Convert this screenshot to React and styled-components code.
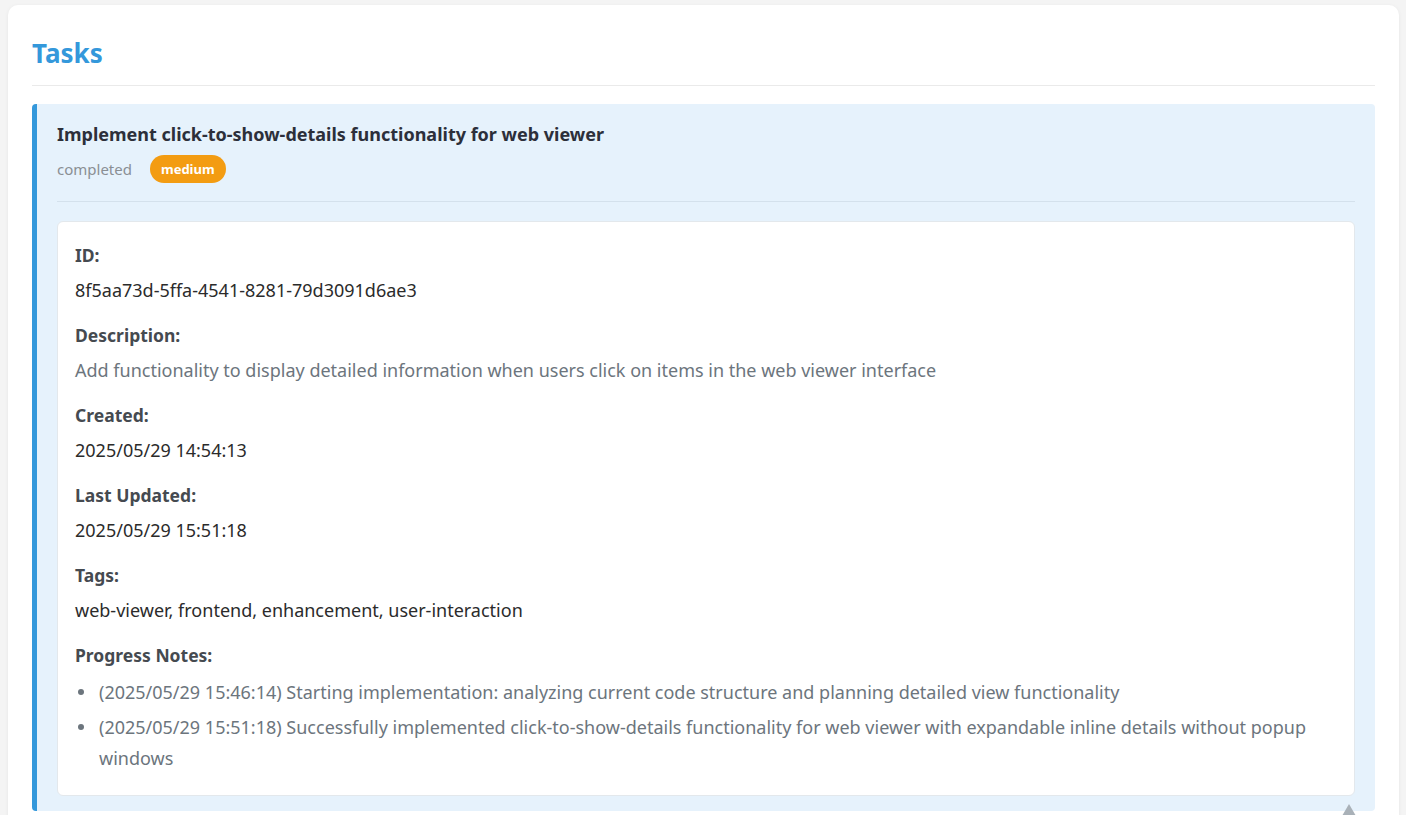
import React from "react";
import styled, { createGlobalStyle } from "styled-components";

const Global = createGlobalStyle`
  html, body { margin: 0; padding: 0; background: #f4f4f4; }
  body { font-family: "Noto Sans", "Open Sans", sans-serif; color: #333; }
  * { box-sizing: border-box; }
`;

const Page = styled.div`
  padding: 5px 7px 0 8px;
`;

const Container = styled.div`
  background: #fff;
  border-radius: 10px;
  box-shadow: 0 1px 4px rgba(0,0,0,0.06);
  padding: 24px 24px 24px 24px;
`;

const Heading = styled.h2`
  margin: 0 0 18px 0;
  padding: 5px 0 13px 0;
  font-size: 26px;
  line-height: 38px;
  font-weight: 700;
  color: #3498db;
  border-bottom: 1px solid #eaeaea;
`;

const TaskCard = styled.div`
  position: relative;
  background: #e6f2fc;
  border-left: 5px solid #3498db;
  border-radius: 4px;
  padding: 17px 20px 15px 20px;
`;

const TaskTitle = styled.div`
  font-size: 18px;
  font-weight: 700;
  color: #2c2f3a;
  line-height: 27px;
`;

const Meta = styled.div`
  display: flex;
  align-items: center;
  gap: 18px;
  margin-top: 7px;
  padding-bottom: 18px;
  border-bottom: 1px solid #d4e1ec;
`;

const Status = styled.span`
  font-size: 15px;
  color: #8a8f94;
`;

const Badge = styled.span`
  display: inline-flex;
  align-items: center;
  height: 28px;
  padding: 0 11px;
  border-radius: 14px;
  background: #f39c12;
  color: #fff;
  font-size: 13px;
  font-weight: 700;
`;

const Details = styled.div`
  margin-top: 19px;
  background: #fff;
  border: 1px solid #e3e8ec;
  border-radius: 6px;
  padding: 20px 18px 17px 17px;
`;

const Field = styled.div`
  margin-bottom: 18px;
  &:last-child { margin-bottom: 0; }
`;

const Label = styled.div`
  font-size: 17.5px;
  font-weight: 700;
  color: #454a50;
  line-height: 27px;
  margin-bottom: 8px;
`;

const Value = styled.div`
  font-size: 18px;
  line-height: 27px;
  color: ${(p) => (p.$muted ? "#6c757d" : "#2b2b2b")};
`;

const Notes = styled.ul`
  margin: 0;
  padding-left: 24px;
  list-style: none;
  color: #6c757d;
  font-size: 18px;
  line-height: 31px;
`;

const Note = styled.li`
  position: relative;
  margin-bottom: 4px;
  &::before {
    content: "";
    position: absolute;
    left: -21px;
    top: 12px;
    width: 6px;
    height: 6px;
    border-radius: 50%;
    background: #6c757d;
  }
`;

const Arrow = styled.div`
  position: absolute;
  right: 19px;
  bottom: -5px;
  width: 0;
  height: 0;
  border-left: 7px solid transparent;
  border-right: 7px solid transparent;
  border-bottom: 12px solid #a9b1b8;
`;

export default function App() {
  return (
    <>
      <Global />
      <Page>
        <Container>
          <Heading>Tasks</Heading>
          <TaskCard>
            <TaskTitle>Implement click-to-show-details functionality for web viewer</TaskTitle>
            <Meta>
              <Status>completed</Status>
              <Badge>medium</Badge>
            </Meta>
            <Details>
              <Field>
                <Label>ID:</Label>
                <Value>8f5aa73d-5ffa-4541-8281-79d3091d6ae3</Value>
              </Field>
              <Field>
                <Label>Description:</Label>
                <Value $muted>
                  Add functionality to display detailed information when users click on items in the web viewer interface
                </Value>
              </Field>
              <Field>
                <Label>Created:</Label>
                <Value>2025/05/29 14:54:13</Value>
              </Field>
              <Field>
                <Label>Last Updated:</Label>
                <Value>2025/05/29 15:51:18</Value>
              </Field>
              <Field>
                <Label>Tags:</Label>
                <Value>web-viewer, frontend, enhancement, user-interaction</Value>
              </Field>
              <Field>
                <Label>Progress Notes:</Label>
                <Notes>
                  <Note>(2025/05/29 15:46:14) Starting implementation: analyzing current code structure and planning detailed view functionality</Note>
                  <Note>(2025/05/29 15:51:18) Successfully implemented click-to-show-details functionality for web viewer with expandable inline details without popup windows</Note>
                </Notes>
              </Field>
            </Details>
            <Arrow />
          </TaskCard>
        </Container>
      </Page>
    </>
  );
}
